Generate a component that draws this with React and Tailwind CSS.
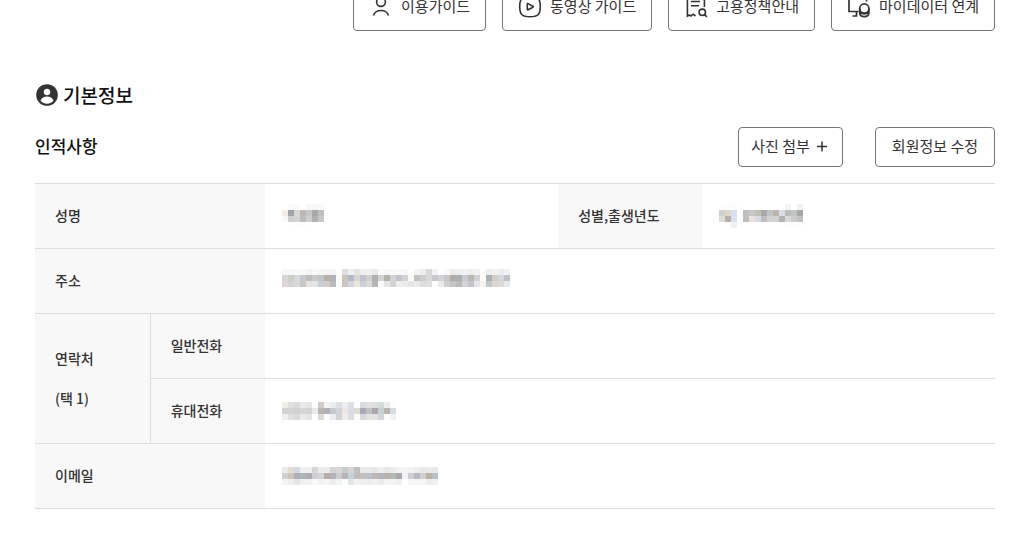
import React from "react";

const guides = [
    { label: "이용가이드", Icon: UserIcon },
    { label: "동영상 가이드", Icon: PlayIcon },
    { label: "고용정책안내", Icon: PolicyIcon },
    { label: "마이데이터 연계", Icon: DataLinkIcon },
];

// masked values, one colour per 6px block ("-" leaves the block empty)
const masked = {
    name: [
        "- #fafafa #fafafa - #f8f8f8 #f8f8f8 #f8f8f8",
        "#f1ece8 #9ea3a8 #dad6d2 #b9b9b5 #c6c9cb #aaa8a8 #bcc0c3",
        "#f8f8f8 #cfcfcf #d3d4d7 #bebeba #cdcfd1 #b1afaf #c5c8cb",
        "- - #fdfdfd #fdfdfd - - -",
    ],
    gender: [
        "#fdfdfd #fcfcfb #f9fcfc - - - - - - - - #f4f4f4 - #f2f2f2",
        "#d0d0ce #e2d6c8 #d4e1ef - #bebebe #cacaca #c2beb4 #a9a9ad #c0c4c8 #bfb4aa #d5dde9 #b9bcbc #c1c4c3 #a6a8a7",
        "#deddd9 #b9afaa #d6e2f0 - #bebebe #e7e4df #d4dae2 #bebebe #d4d1d3 #d4d1d3 #b3b3b5 #d7d9dd #cecbc8 #bfc0c5",
        "- - #f1f1f1 - - - - - - - - #fdfdfd #fdfdfd #fdfdfd",
    ],
    address: [
        "#fcf8f4 #f4f8fb #f8f8f8 #f9f9f9 #f4f4f4 #f9f9f9 #f6f6f6 #f4f4f4 #f4f4f4 - #dedede #efefef #e5e5e5 #eeeeee #f1f1f1 #eaeaea #fafafa #f6f6f6 #fafafa #fafafa #f6f6f6 - #f3f3f3 #eeeeee #d9d9d9 #f0f2f5 - #f8f8f8 #ececec #eeeeee #f2f2f2 #eeeeee #f2f2f2 #fdfdfd #eeeeee #f2f2f2 #ededed #f2f2f2",
        "#d5d5d5 #cfcdc8 #d5d9dd #c6c9ce #bfbdb9 #c8cbcd #c1c4c7 #b9b0a8 #b0b2bc #fcfcfc #c9c5bf #b0b9c6 #d9d5d0 #bfc2cc #d1d1d1 #b0b0b0 #d3d3d3 #b3b3ae #d0d3d8 #c1c4c8 #d1d3d6 #fcf9f4 #bfc3c8 #cbcdcd #d9d9d9 #c8c9ce #d1d3d6 #c5c6c9 #b1adab #abb2b5 #c8cbcd #bbb7b1 #cfd1d4 #fdfbf8 #abb0b2 #d5cdc4 #d1d8e0 #bfc2c4",
        "#ddd8d5 #d3d3d3 #d9d9d9 #c5c9cb #e4e1df #e2e5e8 #cbced0 #d1cdcb #b9b9bf #fdfdfd #c8c5c1 #d3d6dc #ece5dc #ccced9 #dadada #b5b5b5 #fcfafa #e5e5e5 #d3d4d8 #ededed #eaeaea #e5e5e5 #eaeaea #dddddd #dedede - #ebebeb #cecfd2 #c4c4c6 #b8baba #d1d3d6 #c4c5c6 #e6e6e8 #f7f4f0 #c4c7c8 #d9d6d3 #dbdad9 #e6e9ed",
        "-",
    ],
    mobile: [
        "#f1eeea #dee1e4 #dadada #e9e9e9 #e3e5e7 - #d0cdc8 #f4f4f6 #ebeef1 #dadde2 #e8eef2 #dce1e5 - #d8dbdf #e1e1e1 #dfdede #d3dadc #eeece9 #fcfcfc",
        "#d3d3d3 #d5d5d5 #d0d0d0 #d5d5d5 #d3d3d3 #e9e9e9 #b9b5af #b0b1b7 #c6c8cf #d1d3d6 #ece7e2 #d8dee4 #e2dbd5 #a9aab4 #bfc0c8 #ada6a8 #c7d1d2 #bab3ab #d5dbe4",
        "#f2efeb #dddfe3 #dadada #e9eaec #e3e6e8 - #dedbd7 #fefefe #ebedf0 #d3d3d5 #eeeef0 #dadfe4 #fcfafa #d8d8dc #e2e1df #e4e3e4 #d1d6dc #fdfbf9 #f0f2f6",
    ],
    email: [
        "#ebebeb #e3ddd5 #d3d9e2 #eeeeee #eeeeee #dad6d8 #ececec #ebebeb #d7d3d6 #dad6d5 #c6cccb #d7d3d0 #bfbfbf #e8e9eb #eceae8 #e4e7e8 #eeeeee #e9e8e6 #eaecee #f2f2f2 #f4f4f4 #f2f2f2 #eeeeee #e6e9e9 #ebebed #e7eaea",
        "#d2d1d0 #cfc2b7 #afb0b5 #acb5bc #b0acae #cdcfd1 #d4d5d4 #b8aca3 #b2b2bf #cacdc9 #b6b3b9 #c5d1d3 #bfbdba #c4c1bd #bbc1cb #bfb7b3 #b1b5bf #b7b1aa #b4baba #ada9aa #eff3f7 #cfcfcf #bcbabc #cfcfcf #bdb1a4 #b8c3ce",
        "#f5f5f5 #f0eeec #e5e5e5 #eff0f1 #f1f1f3 #fafafa #f2f2f2 #f7f4f1 #eeeef2 #f3f5f4 - #e0e8ea #f2f2f2 #f2f0ef #eeeef1 #f4f2f0 #ececee #f4f3f2 #f2f5f5 #f0f0f0 - #f7f7f7 #f7f7f7 #f7f7f7 #efedeb #eef2f5",
    ],
};

function UserIcon() {
    return (
        <svg className="size-6" viewBox="0 0 24 24" fill="none" stroke="#333" strokeWidth="1.6">
            <circle cx="12" cy="8" r="4.4" />
            <path d="M4.500 21.500c1-3.400 3.900-5 7.500-5s6.500 1.600 7.500 5" />
        </svg>
    );
}

function PlayIcon() {
    return (
        <svg className="size-6" viewBox="0 0 24 24" fill="none" stroke="#333" strokeWidth="1.6" strokeLinejoin="round">
            <path d="M12 2.200c7.700 0 10.300 2 10.300 10.300S19.700 22.800 12 22.800 1.700 20.800 1.700 12.500 4.300 2.200 12 2.200z" />
            <path d="M9.300 10v5.400q0 .8.8.4l4.800-2.600q.7-.5 0-1l-4.800-2.600q-.8-.4-.8.4z" />
        </svg>
    );
}

function PolicyIcon() {
    return (
        <svg className="size-6" viewBox="0 0 24 24" fill="none" stroke="#333" strokeWidth="1.600">
            <path d="M11.500 22l-2.300-1.800-2.300 1.800-1.500-1-2 1.200V2.500h17V13" />
            <path d="M7 7.500h9M7 11.700h8" />
            <circle cx="18.300" cy="18.300" r="3.200" />
            <path d="M20.600 20.600l2.200 2.300" />
        </svg>
    );
}

function DataLinkIcon() {
    return (
        <svg className="size-6" viewBox="0 0 24 24" fill="none" stroke="#333" strokeWidth="1.700">
            <path d="M19.500 7.500V3H2v14.500h9.500M9.500 17.500V22H5.500" />
            <circle cx="17.300" cy="14.500" r="4.600" />
            <path d="M12.700 14.500v4.300c0 5.200 9.200 5.200 9.200 0v-4.300M12.900 17.500c1.600 3.300 7.200 3.300 8.800 0" />
        </svg>
    );
}

function ProfileIcon() {
    return (
        <svg className="size-6" viewBox="0 0 24 24">
            <circle cx="12" cy="12" r="10.800" fill="#333" />
            <circle cx="12" cy="9" r="3.200" fill="#fff" />
            <path d="M5.500 17.800c1-3 3.600-4.200 6.500-4.200s5.500 1.200 6.500 4.200c-3.500 4-9.500 4-13 0z" fill="#fff" />
        </svg>
    );
}

function Masked({ rows }) {
    const grid = rows.map((row) => row.split(" "));
    const width = grid[0].length * 6;
    const height = grid.length * 6;

    return (
        <svg width={width} height={height} className="block" shapeRendering="crispEdges" aria-hidden="true">
            {grid.map((row, y) =>
                row.map((fill, x) => fill !== "-" && <rect key={`${x}-${y}`} x={x * 6} y={y * 6} width="6" height="6" fill={fill} />)
            )}
        </svg>
    );
}

function Label({ children, className = "", ...rest }) {
    return (
        <th className={`bg-[#f8f8f8] px-5 pb-0.5 text-left text-sm font-medium ${className}`} {...rest}>
            {children}
        </th>
    );
}

function Value({ rows, ...rest }) {
    return (
        <td className="px-[17px]" {...rest}>
            {rows && <Masked rows={rows} />}
        </td>
    );
}

function App() {
    return (
        <main className="overflow-hidden bg-white pl-[35px] pr-[14px] pb-9 font-['Noto_Sans_CJK_KR','Noto_Sans',sans-serif] text-[#333]">
            <nav className="-mt-[19px] flex justify-end gap-4">
                {guides.map(({ label, Icon }) => (
                    <button key={label} type="button" className="flex h-[50px] items-center gap-2 rounded-[4px] border border-[#777] px-[15px] text-[15px] whitespace-nowrap">
                        <Icon />
                        {label}
                    </button>
                ))}
            </nav>

            <h2 className="mt-[50px] flex h-7 items-center gap-1 text-[19px] font-medium text-[#111]">
                <ProfileIcon />
                기본정보
            </h2>

            <div className="mt-[18px] flex items-center">
                <h3 className="pb-0.5 text-[17px] font-medium text-[#111]">인적사항</h3>
                <div className="ml-auto flex gap-8">
                    <button type="button" className="flex h-10 items-center gap-1 rounded-[4px] border border-[#777] px-3 pb-0.5 text-[15px]">
                        사진 첨부
                        <svg className="size-4" viewBox="0 0 16 16" stroke="#333" strokeWidth="1.500">
                            <path d="M8 3.500v10M3 8.500h10" />
                        </svg>
                    </button>
                    <button type="button" className="h-10 rounded-[4px] border border-[#777] px-4 pb-0.5 text-[15px]">
                        회원정보 수정
                    </button>
                </div>
            </div>

            <table className="mt-4 w-full table-fixed border-collapse border-y border-[#ddd]">
                <colgroup>
                    <col className="w-[12%]" />
                    <col className="w-[12%]" />
                    <col className="w-[30.5%]" />
                    <col className="w-[15%]" />
                    <col className="w-[30.5%]" />
                </colgroup>
                <tbody>
                    <tr className="h-[65px] border-b border-[#ddd]">
                        <Label scope="row" colSpan={2}>성명</Label>
                        <Value rows={masked.name} />
                        <Label scope="row">성별,출생년도</Label>
                        <Value rows={masked.gender} />
                    </tr>
                    <tr className="h-[65px] border-b border-[#ddd]">
                        <Label scope="row" colSpan={2}>주소</Label>
                        <Value rows={masked.address} colSpan={3} />
                    </tr>
                    <tr className="h-[65px] border-b border-[#ddd]">
                        <Label scope="rowgroup" rowSpan={2} className="border-r border-[#ddd] leading-10">
                            연락처
                            <br />
                            (택 1)
                        </Label>
                        <Label scope="row">일반전화</Label>
                        <Value colSpan={3} />
                    </tr>
                    <tr className="h-[65px] border-b border-[#ddd]">
                        <Label scope="row">휴대전화</Label>
                        <Value rows={masked.mobile} colSpan={3} />
                    </tr>
                    <tr className="h-[65px]">
                        <Label scope="row" colSpan={2}>이메일</Label>
                        <Value rows={masked.email} colSpan={3} />
                    </tr>
                </tbody>
            </table>
        </main>
    );
}

export default App;
